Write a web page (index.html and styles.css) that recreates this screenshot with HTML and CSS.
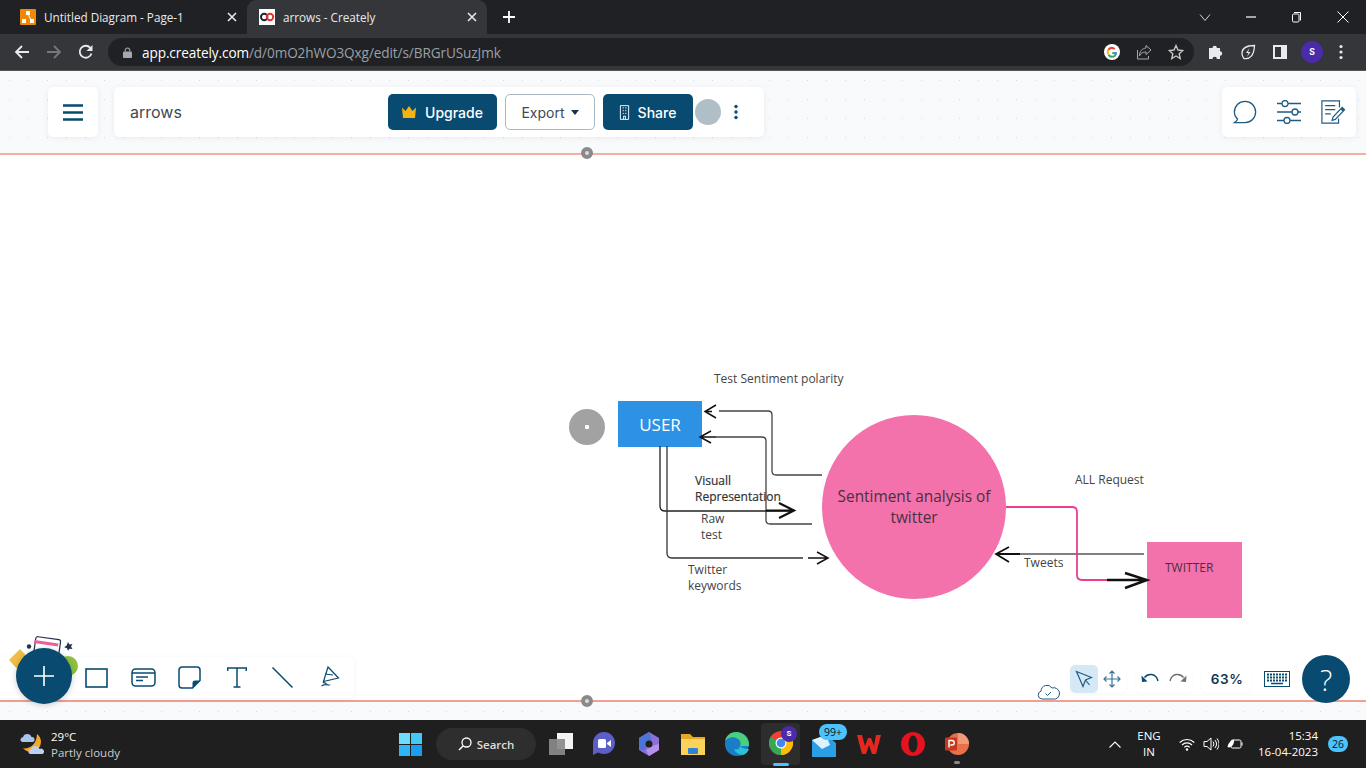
FILE: index.html
```html
<!DOCTYPE html>
<html lang="en">
<head>
    <meta charset="UTF-8">
    <title>arrows - Creately</title>
    <link rel="stylesheet" href="styles.css">
</head>
<body>
    <!-- browser chrome -->
    <div class="tabstrip">
        <div class="tab">
            <svg class="favicon" viewBox="0 0 16 16"><rect width="16" height="16" rx="1" fill="#f08705"/><path d="M6 2h4v4H9l2 4h3v4h-4v-4l-2-4-2 4v4H2v-4h4l2-4H6z" fill="#fff"/></svg>
            <span class="tab-title">Untitled Diagram - Page-1</span>
            <svg class="tab-close" viewBox="0 0 10 10"><path d="M1 1l8 8M9 1l-8 8" stroke="#e8eaed" stroke-width="1.6"/></svg>
        </div>
        <div class="tab tab-active">
            <svg class="favicon" viewBox="0 0 16 16"><rect width="16" height="16" fill="#fff"/><circle cx="5.2" cy="8" r="3.2" fill="none" stroke="#1d2433" stroke-width="2"/><circle cx="11" cy="8" r="3.2" fill="none" stroke="#e5322d" stroke-width="2"/></svg>
            <span class="tab-title">arrows - Creately</span>
            <svg class="tab-close" viewBox="0 0 10 10"><path d="M1 1l8 8M9 1l-8 8" stroke="#e8eaed" stroke-width="1.6"/></svg>
        </div>
        <svg class="new-tab" viewBox="0 0 12 12"><path d="M6 0v12M0 6h12" stroke="#fff" stroke-width="1.8"/></svg>
        <div class="win-btns">
            <svg viewBox="0 0 12 12"><path d="M1 3.5l5 6 5-6" fill="none" stroke="#d0d2d6" stroke-width="1"/></svg>
            <svg viewBox="0 0 12 12"><path d="M1 6h10" stroke="#fff" stroke-width="1.2"/></svg>
            <svg viewBox="0 0 12 12"><path d="M3 1.5h6.500v8" fill="none" stroke="#fff" stroke-width="1"/><rect x="1.500" y="3" width="6.500" height="8" rx="1.200" fill="none" stroke="#fff" stroke-width="1"/></svg>
            <svg viewBox="0 0 12 12"><path d="M.5.5l11 11M11.500.5l-11 11" stroke="#fff" stroke-width="1"/></svg>
        </div>
    </div>
    <div class="toolbar">
        <div class="nav-btns">
            <svg viewBox="0 0 16 16"><path d="M15 8H2M8 2L2 8l6 6" fill="none" stroke="#e8eaed" stroke-width="1.800"/></svg>
            <svg viewBox="0 0 16 16"><path d="M1 8h13M8 2l6 6-6 6" fill="none" stroke="#74777b" stroke-width="1.800"/></svg>
            <svg viewBox="0 0 16 16"><path d="M13.500 9.500A6 6 0 1 1 12.300 3.800" fill="none" stroke="#e8eaed" stroke-width="1.800"/><path d="M14.500 1v6h-6z" fill="#e8eaed"/></svg>
        </div>
        <div class="omnibox">
            <svg class="lock" viewBox="0 0 10 12"><path d="M2.500 5V3.500a2.500 2.500 0 0 1 5 0V5" fill="none" stroke="#a5a8ac" stroke-width="1.200"/><rect y="5" width="10" height="7" rx="1" fill="#a5a8ac"/></svg>
            <span class="url"><b>app.creately.com</b>/d/0mO2hWO3Qxg/edit/s/BRGrUSuzJmk</span>
            <svg class="omni-icon" viewBox="0 0 16 16"><circle cx="8" cy="8" r="8" fill="#fff"/><path d="M12.800 8.200H8.200v1.700h2.700a3.100 3.100 0 0 1-5.700.1L3.700 11.200A4.900 4.900 0 0 0 12.800 8.200z" fill="#34a853"/><path d="M5.100 9.600a3.100 3.100 0 0 1 0-3.200L3.700 5.100a4.900 4.900 0 0 0 0 5.800z" fill="#fbbc05"/><path d="M8 4.900a3 3 0 0 1 2.100.8l1.300-1.300A4.900 4.900 0 0 0 3.700 5.100L5.100 6.400A3 3 0 0 1 8 4.900z" fill="#ea4335"/><path d="M12.800 8.200h-3v1.700h1.100a3 3 0 0 1-1 1.300l1.200 1.200c1.100-1 1.800-2.400 1.700-4.200z" fill="#4285f4"/></svg>
            <svg class="omni-icon" viewBox="0 0 16 16"><path d="M10 1.500L15 6l-5 4.500V8C6.500 8 4.500 9.500 3.500 12c0-4.500 2.500-7.500 6.500-8z M1.500 6v9h11v-3" fill="none" stroke="#a5a8ac" stroke-width="1"/></svg>
            <svg class="omni-icon" viewBox="0 0 16 16"><path d="M8 1.500l2 4.500 4.800.5-3.600 3.200 1 4.800L8 12l-4.200 2.500 1-4.800L1.200 6.500 6 6z" fill="none" stroke="#c4c7c5" stroke-width="1.400"/></svg>
        </div>
        <div class="ext-btns">
            <svg viewBox="0 0 16 16"><path d="M1 4h3.500a2.200 2.200 0 0 1 4.400 0H12v3.300a2.200 2.200 0 0 1 0 4.400V15H8.900a2.200 2.200 0 0 0-4.400 0H1z" fill="#e8eaed"/></svg>
            <svg viewBox="0 0 16 16"><path d="M14.500 1.500C9 1.500 2 3 2 9.500c0 2 1 4 2 5 6 1 10-3 10.500-13z" fill="none" stroke="#e8eaed" stroke-width="1.300"/><path d="M9.500 4L6 9h2.500L7 13l3.500-5H8z" fill="#e8eaed"/></svg>
            <svg viewBox="0 0 16 16"><rect x="1" y="1" width="14" height="14" fill="#e8eaed"/><rect x="3" y="3" width="6" height="10" fill="#35363a"/></svg>
            <span class="profile">S</span>
            <svg class="chrome-menu" viewBox="0 0 4 16"><circle cx="2" cy="2.500" r="1.600" fill="#e8eaed"/><circle cx="2" cy="8" r="1.600" fill="#e8eaed"/><circle cx="2" cy="13.500" r="1.600" fill="#e8eaed"/></svg>
        </div>
    </div>

    <!-- creately canvas -->
    <main class="canvas">
        <div class="band band-top"></div>
        <div class="band band-bottom"></div>

        <svg class="connectors" viewBox="0 71 1366 649">
            <g fill="none" stroke="#444" stroke-width="1.300">
                <path d="M822 475H776Q772 475 772 471V415Q772 411 768 411H719"/>
                <path d="M812 524H770Q766 524 766 520V441Q766 437 762 437H716"/>
                <path d="M660 446V506Q660 511 665 511H790" stroke="#222"/>
                <path d="M667 446V553Q667 558 672 558H803" stroke="#333"/>
                <path d="M1144 554H1020" stroke="#555" stroke-width="1.500"/>
            </g>
            <path d="M1006 507H1072Q1077 507 1077 512V575Q1077 580 1082 580H1107" fill="none" stroke="#ea3f8d" stroke-width="1.800"/>
            <g fill="none" stroke="#111" stroke-width="1.500">
                <path d="M716 405L705 411.500L716 418M705 411.500H712"/>
                <path d="M711 431L700 437L711 443M700 437H716"/>
                <path d="M817 552L828 558L817 564M808 558H828"/>
                <path d="M1009 547L996 554L1009 562M996 554H1020" stroke-width="1.800"/>
                <path d="M779 503L794 510.500L779 518M766 510.500H794" stroke-width="2.200"/>
                <path d="M1125 573L1147 580L1125 588M1107 580H1147" stroke-width="2.400"/>
            </g>
        </svg>

        <div class="handle-dot handle-top"></div>
        <div class="handle-dot handle-bottom"></div>
        <div class="node-handle"></div>

        <div class="node node-user">USER</div>
        <div class="node node-sentiment">Sentiment analysis of twitter</div>
        <div class="node node-twitter">TWITTER</div>

        <div class="label label-polarity">Test Sentiment polarity</div>
        <div class="label label-visual">Visuall<br>Representation</div>
        <div class="label label-raw">Raw<br>test</div>
        <div class="label label-keywords">Twitter<br>keywords</div>
        <div class="label label-request">ALL Request</div>
        <div class="label label-tweets">Tweets</div>

        <header class="top-row">
            <button class="panel menu-btn" aria-label="Menu">
                <svg viewBox="0 0 20 17"><path d="M0 1.500h20M0 8.500h20M0 15.500h20" stroke="#084a70" stroke-width="2.600"/></svg>
            </button>
            <div class="panel title-bar">
                <span class="doc-name">arrows</span>
                <button class="btn btn-dark btn-upgrade">
                    <svg viewBox="0 0 14 12"><path d="M0 1.500l3.500 3.500L7 0l3.500 5L14 1.500 13 12H1z" fill="#f5b30f"/></svg>
                    Upgrade
                </button>
                <button class="btn btn-export">Export <i class="caret"></i></button>
                <button class="btn btn-dark btn-share">
                    <svg viewBox="0 0 12 16"><path d="M1.500.5h9v15h-9zM4 3h1.300M6.800 3h1.300M4 6h1.300M6.800 6h1.300M4 9h1.300M6.800 9h1.300M5 15.500V12h2v3.500" fill="none" stroke="#fff" stroke-width="1"/></svg>
                    Share
                </button>
                <span class="avatar"></span>
                <svg class="more" viewBox="0 0 4 16"><circle cx="2" cy="2.500" r="1.700" fill="#084a70"/><circle cx="2" cy="8" r="1.700" fill="#084a70"/><circle cx="2" cy="13.500" r="1.700" fill="#084a70"/></svg>
            </div>
            <div class="panel side-tools">
                <svg viewBox="0 0 26 26"><path d="M5 20.500C2.500 18.500 1.500 16 1.500 13 1.500 6.500 6.500 1.500 13 1.500S24.500 6.500 24.500 13 19.500 24.500 13 24.500C10 24.500 6 24.500 1.800 24.500 3.500 23.500 4.500 22.500 5 20.500z" fill="none" stroke="#1f5c82" stroke-width="1.400"/></svg>
                <svg viewBox="0 0 26 24"><g fill="none" stroke="#1f5c82" stroke-width="1.300"><path d="M1 3.500h5M12 3.500h13M1 12h15M22 12h3M1 20.500h7M14 20.500h11"/><circle cx="9" cy="3.500" r="3"/><circle cx="19" cy="12" r="3"/><circle cx="11" cy="20.500" r="3"/></g></svg>
                <svg viewBox="0 0 26 26"><g fill="none" stroke="#1f5c82" stroke-width="1.300"><path d="M20 8V1H1v24h18v-5M4.500 6h11M4.500 10.500h11M4.500 15h6"/></g><path d="M23 8l2.500 2.500-10 10.500-3.500 1 1-3.500z" fill="none" stroke="#1f5c82" stroke-width="1.300"/><path d="M23 8l2.500 2.500-2 2-2.500-2.500z" fill="#1f5c82"/></svg>
            </div>
        </header>

        <div class="shape-bar">
            <svg class="tool tool-rect" viewBox="0 0 23 20"><rect x="1" y="1" width="21" height="18" fill="none" stroke="#084a70" stroke-width="1.600"/></svg>
            <svg class="tool tool-card" viewBox="0 0 25 19"><rect x="1" y="1" width="23" height="17" rx="3.500" fill="none" stroke="#084a70" stroke-width="1.500"/><path d="M1 5h23M5 9h12M5 12.500h7" stroke="#084a70" stroke-width="1.400"/></svg>
            <svg class="tool tool-note" viewBox="0 0 23 23"><path d="M22 14.500V4a3 3 0 0 0-3-3H4a3 3 0 0 0-3 3v15a3 3 0 0 0 3 3h10.500z" fill="none" stroke="#084a70" stroke-width="1.500"/><path d="M22 14.500L14.500 22v-5a2.500 2.500 0 0 1 2.500-2.500z" fill="#084a70"/></svg>
            <svg class="tool tool-text" viewBox="0 0 20 21"><path d="M.7 4V1h18.600v3M10 1v19M6.500 20h7" fill="none" stroke="#084a70" stroke-width="1.500"/></svg>
            <svg class="tool tool-line" viewBox="0 0 21 21"><path d="M.5.500l20 20" stroke="#084a70" stroke-width="1.500"/></svg>
            <svg class="tool tool-pen" viewBox="0 0 20 23"><path d="M8 1l10.500 11-15 3.500zM5 8l8 1M3 17c2-2 4 3 6 2-2-.5-5-.5-7.500 1" fill="none" stroke="#084a70" stroke-width="1.200"/></svg>
        </div>

        <svg class="fab-art" viewBox="0 0 72 42">
            <path d="M1 24L12 13 24 26 12 36z" fill="#f0bd48"/>
            <circle cx="60" cy="30" r="10" fill="#8dc13f"/>
            <rect x="26" y="2" width="25" height="28" rx="2" fill="#fff" stroke="#26304f" stroke-width="1.200" transform="rotate(8 38 16)"/>
            <path d="M26.500 4l24 3.400-.6 3-24-3.400z" fill="#e9609d"/>
            <path d="M60 6l1.500 2.500 3-.5-1.500 2.500 1.500 2.500-3-.3-1.500 2-1-2.500-2.800-1 2.400-1.700z" fill="#26304f"/>
            <circle cx="21" cy="10.500" r="2.200" fill="#26304f"/>
        </svg>
        <button class="round-btn fab" aria-label="Add">
            <svg viewBox="0 0 20 20"><path d="M10 0v20M0 10h20" stroke="#fff" stroke-width="1.600"/></svg>
        </button>

        <svg class="cloud" viewBox="0 0 23 17"><path d="M5 16a4 4 0 0 1-1-7.800A6 6 0 0 1 15 5a4.500 4.500 0 0 1 3.500 11z" fill="none" stroke="#1f5c82" stroke-width="1"/><path d="M8.500 10.500l2 2 3.500-3.500" fill="none" stroke="#1f5c82" stroke-width="1"/></svg>
        <div class="view-tools">
            <div class="pill pill-cursor">
                <span class="seg seg-active"><svg viewBox="0 0 18 18"><path d="M1.500 1.500l15 6-6 2.500-2.500 6.500z M10.500 10l4 5" fill="none" stroke="#1f5c82" stroke-width="1.200"/></svg></span>
                <span class="seg"><svg viewBox="0 0 18 18"><path d="M9 1v16M1 9h16M6.500 3.500L9 1l2.500 2.500M6.500 14.500L9 17l2.500-2.500M3.500 6.500L1 9l2.500 2.500M14.500 6.500L17 9l-2.500 2.500" fill="none" stroke="#3b7399" stroke-width="1.200"/></svg></span>
            </div>
            <div class="pill pill-undo">
                <span class="seg"><svg viewBox="0 0 18 14"><path d="M3.500 5.500C7 1 15 1 17 9" fill="none" stroke="#084a70" stroke-width="1.400"/><path d="M.5 3.500L6.500 9.500 1 10z" fill="#084a70"/></svg></span>
                <span class="seg"><svg viewBox="0 0 18 14"><path d="M14.500 5.500C11 1 3 1 1 9" fill="none" stroke="#6d7278" stroke-width="1.400"/><path d="M17.500 3.500L11.500 9.500 17 10z" fill="#6d7278"/></svg></span>
            </div>
            <div class="pill pill-zoom">63%</div>
            <svg class="keyboard" viewBox="0 0 26 16"><rect x=".5" y=".5" width="25" height="15" fill="none" stroke="#084a70"/><path d="M3 3.500h20M3 6.500h20M3 9.500h20" stroke="#084a70" stroke-width="2" stroke-dasharray="2 1"/><path d="M7 12.500h12" stroke="#084a70" stroke-width="1.500"/></svg>
            <button class="round-btn help">?</button>
        </div>
    </main>

    <!-- windows taskbar -->
    <footer class="taskbar">
        <div class="weather">
            <svg viewBox="0 0 24 24"><path d="M17 2a10 10 0 1 1-14 14c6 2 14-4 14-14z" fill="#f3a72e"/><path d="M2 10a2.500 2.500 0 0 1 1-4.800A4.500 4.500 0 0 1 11.500 5a2.500 2.500 0 0 1 1 5z" fill="#a9c4ee"/><path d="M10 22a2.500 2.500 0 0 1 1-4.800 4.500 4.500 0 0 1 8.500-.2 2.600 2.600 0 0 1 3 5z" fill="#bcd0f2"/></svg>
            <div class="weather-text"><span>29°C</span><small>Partly cloudy</small></div>
        </div>
        <div class="task-icons">
            <svg class="ti-start" viewBox="0 0 23 23"><rect width="11" height="11" fill="#6fdcfb"/><rect x="12" width="11" height="11" fill="#45c7f8"/><rect y="12" width="11" height="11" fill="#2eb6f6"/><rect x="12" y="12" width="11" height="11" fill="#1a9cf0"/></svg>
            <div class="search-pill">
                <svg viewBox="0 0 14 14"><circle cx="8.500" cy="5.500" r="4.500" fill="none" stroke="#fff" stroke-width="1.300"/><path d="M5.300 8.700L1 13" stroke="#fff" stroke-width="1.500"/></svg>
                Search
            </div>
            <svg class="ti ti-widgets" viewBox="0 0 24 24"><rect x="8" y="1" width="16" height="16" fill="#f4f4f4"/><rect y="7" width="16" height="16" fill="#8a8a8a" opacity=".92"/></svg>
            <svg class="ti ti-meet" viewBox="0 0 24 24"><circle cx="12" cy="11" r="11" fill="#5b5fc7"/><path d="M1 11v12l6-3z" fill="#5b5fc7"/><rect x="6" y="7" width="8" height="9" rx="1.500" fill="#fff"/><path d="M15 11l4-3v7l-4-3z" fill="#fff"/></svg>
            <svg class="ti ti-hub" viewBox="0 0 22 24"><path d="M11 0l10 6v12l-10 6-10-6V6z" fill="#8c6fd8"/><path d="M1 6l10-6 3 8-6 4v6L1 18z" fill="#4f74d8"/><path d="M21 12v6l-10 6-3-6 6-4z" fill="#b690e8"/><circle cx="11" cy="12" r="3.500" fill="#202020"/></svg>
            <svg class="ti ti-folder" viewBox="0 0 24 24"><path d="M0 2h9l3 3h12v17H0z" fill="#e7a923"/><rect y="7" width="24" height="16" fill="#fbd35a"/><rect x="7" y="16" width="10" height="6" rx="1" fill="#2b84d6"/></svg>
            <svg class="ti ti-edge" viewBox="0 0 24 24"><circle cx="12" cy="12" r="12" fill="#1a7dc8"/><path d="M24 13C24 5 17 0 11 0 5 0 1 4 0 9c3-4 9-5 13-2 3 2 3 5 2 7h9z" fill="#47d17a"/><path d="M15 14c0 3-3 4-6 3 1 3 5 6 9 6 3-1 5-3 6-6-2 0-6 0-9-3z" fill="#2bc1d6"/></svg>
            <div class="ti-chrome">
                <svg viewBox="0 0 24 24"><circle cx="12" cy="12" r="12" fill="#ea4335"/><path d="M12 12L22.400 6A12 12 0 0 1 12 24z" fill="#fbbc05"/><path d="M12 12L12 24A12 12 0 0 1 1.600 6z" fill="#34a853"/><circle cx="12" cy="12" r="5.500" fill="#fff"/><circle cx="12" cy="12" r="4.300" fill="#4285f4"/></svg>
                <span class="chrome-badge">S</span>
                <i class="running running-active"></i>
            </div>
            <div class="ti-mail">
                <svg viewBox="0 0 24 24"><path d="M0 6l14-5 10 8v14H0z" fill="#2a9fe6"/><path d="M0 6l14-5 4 10-8 4z" fill="#dff1fd"/></svg>
                <span class="mail-badge">99+</span>
            </div>
            <svg class="ti ti-wps" viewBox="0 0 24 22"><path d="M0 2l5 0 3 11 3-8h3l3 8 2-11h5l-5 19h-4L12 12l-3 9H5z" fill="#e5281f"/></svg>
            <svg class="ti ti-opera" viewBox="0 0 24 24"><circle cx="12" cy="12" r="12" fill="#e3131f"/><ellipse cx="12" cy="12" rx="4.500" ry="8.500" fill="#202020"/></svg>
            <div class="ti-ppt">
                <svg viewBox="0 0 24 24"><circle cx="13" cy="12" r="11" fill="#e8704b"/><path d="M13 1a11 11 0 0 1 11 11H13z" fill="#f09a7a"/><rect y="5.500" width="12" height="13" rx="1" fill="#c4391d"/><path d="M4 15.500v-7h3a2.200 2.200 0 0 1 0 4.500H5.300" fill="none" stroke="#fff" stroke-width="1.400"/></svg>
                <i class="running"></i>
            </div>
        </div>
        <div class="tray">
            <svg class="tray-up" viewBox="0 0 12 7"><path d="M.5 6.500L6 1l5.500 5.500" fill="none" stroke="#fff" stroke-width="1.100"/></svg>
            <div class="lang">ENG<br>IN</div>
            <svg class="tray-wifi" viewBox="0 0 16 13"><path d="M.7 4.500a10.500 10.500 0 0 1 14.600 0M3 7a7 7 0 0 1 10 0M5.300 9.300a3.700 3.700 0 0 1 5.400 0" fill="none" stroke="#fff" stroke-width="1.100"/><circle cx="8" cy="11.500" r="1.200" fill="#fff"/></svg>
            <svg class="tray-vol" viewBox="0 0 16 14"><path d="M1 4.500h3L8 1v12L4 9.500H1z" fill="none" stroke="#fff" stroke-width="1"/><path d="M10 4.500a4 4 0 0 1 0 5M12 3a6.500 6.500 0 0 1 0 8M14 1.500a9 9 0 0 1 0 11" fill="none" stroke="#fff" stroke-width="1"/></svg>
            <svg class="tray-bat" viewBox="0 0 16 12"><rect x="4" y="2" width="10" height="8" rx="1.500" fill="none" stroke="#fff" stroke-width="1"/><path d="M15 4.500v3" stroke="#fff"/><path d="M.5 9C1 5 3.500 2.500 7 1.500 7.500 6 5 9 2 9.500" fill="#fff"/></svg>
            <div class="clock">15:34<br>16-04-2023</div>
            <span class="notif">26</span>
        </div>
    </footer>
</body>
</html>
```

FILE: styles.css
```css
* {
    box-sizing: border-box;
}
html, body {
    margin: 0;
    padding: 0;
}
body {
    width: 1366px;
    height: 768px;
    overflow: hidden;
    display: flex;
    flex-direction: column;
    font-family: "Open Sans", sans-serif;
    background: #fff;
}
svg {
    display: block;
    flex: none;
}
button {
    font: inherit;
    border: none;
    padding: 0;
    cursor: pointer;
}

/* browser chrome */
.tabstrip {
    height: 34px;
    flex: none;
    display: flex;
    align-items: stretch;
    background: #202124;
    padding-left: 8px;
    color: #e8eaed;
}
.tab {
    width: 239px;
    display: flex;
    align-items: center;
    padding: 0 10px 0 12px;
    font-size: 11.700px;
}
.tab-active {
    width: 240px;
    background: #35363a;
    border-radius: 9px 9px 0 0;
}
.favicon {
    width: 16px;
    height: 16px;
    margin-right: 8px;
}
.tab-title {
    flex: 1;
    white-space: nowrap;
    padding-bottom: 1px;
}
.tab-close {
    width: 10px;
    height: 10px;
}
.new-tab {
    width: 12px;
    height: 12px;
    margin: 11px 0 0 16px;
}
.win-btns {
    margin-left: auto;
    display: flex;
    gap: 34px;
    padding: 11px 17px 0 0;
}
.win-btns svg {
    width: 12px;
    height: 12px;
}
.toolbar {
    height: 37px;
    flex: none;
    display: flex;
    align-items: flex-start;
    background: #35363a;
    padding-top: 4px;
    border-bottom: 1px solid #555;
}
.nav-btns {
    width: 108px;
    height: 28px;
    display: flex;
    align-items: center;
    gap: 16px;
    padding-left: 14px;
}
.nav-btns svg {
    width: 16px;
    height: 16px;
}
.omnibox {
    width: 1086px;
    height: 28px;
    display: flex;
    align-items: center;
    background: #202124;
    border-radius: 14px;
    padding: 0 10px 0 15px;
}
.lock {
    width: 9px;
    height: 11px;
    margin-right: 10px;
}
.url {
    flex: 1;
    font-size: 13.600px;
    color: #9aa0a6;
    letter-spacing: -.1px;
}
.url b {
    font-weight: 400;
    color: #fff;
}
.omni-icon {
    width: 16px;
    height: 16px;
    margin-left: 16px;
}
.ext-btns {
    height: 28px;
    display: flex;
    align-items: center;
    gap: 16px;
    padding-left: 14px;
}
.ext-btns svg {
    width: 16px;
    height: 16px;
}
.ext-btns .chrome-menu {
    width: 4px;
    margin-left: 3px;
}
.profile {
    width: 22px;
    height: 22px;
    margin: 0 -3px;
    border-radius: 50%;
    background: #4a2ba8;
    color: #fff;
    font: 700 9px Roboto, sans-serif;
    display: flex;
    align-items: center;
    justify-content: center;
}

/* canvas */
.canvas {
    flex: 1;
    position: relative;
    background: #fff;
    overflow: hidden;
}
.band {
    position: absolute;
    left: 0;
    right: 0;
    background-color: #f9fafc;
    background-image: radial-gradient(#d6d9de 0.7px, transparent 0.9px);
    background-size: 19px 19px;
}
.band-top {
    top: 0;
    height: 84px;
    border-bottom: 2px solid #f6b0a2;
}
.band-bottom {
    top: 629px;
    height: 20px;
    border-top: 2px solid #f0a090;
}
.connectors {
    position: absolute;
    left: 0;
    top: 0;
    width: 1366px;
    height: 649px;
    z-index: 2;
}
.handle-dot {
    position: absolute;
    left: 581px;
    width: 12px;
    height: 12px;
    border-radius: 50%;
    border: 4px solid #8a8a8a;
    background: #ddd;
}
.handle-top {
    top: 76px;
}
.handle-bottom {
    top: 624px;
}
.node-handle {
    position: absolute;
    left: 569px;
    top: 338px;
    width: 36px;
    height: 36px;
    border-radius: 50%;
    background: radial-gradient(circle, #fff 0 2px, #a2a2a2 2.500px);
}
.node {
    position: absolute;
    display: flex;
    align-items: center;
    justify-content: center;
    text-align: center;
}
.node-user {
    left: 618px;
    top: 330px;
    width: 84px;
    height: 46px;
    background: #2d92e3;
    color: #fff;
    font-size: 17px;
}
.node-sentiment {
    left: 822px;
    top: 344px;
    width: 184px;
    height: 184px;
    padding: 0 14px;
    border-radius: 50%;
    background: #f472ab;
    color: #4a3040;
    font-size: 15.400px;
    line-height: 21px;
}
.node-twitter {
    left: 1147px;
    top: 471px;
    width: 95px;
    height: 76px;
    background: #f472ab;
    color: #4a3040;
    font-size: 12px;
    align-items: flex-start;
    justify-content: flex-start;
    padding: 17px 0 0 18px;
}
.label {
    position: absolute;
    z-index: 3;
    font-size: 12px;
    line-height: 16px;
    color: #444;
    white-space: nowrap;
}
.label-polarity {
    left: 714px;
    top: 300px;
}
.label-visual {
    left: 695px;
    top: 402px;
    color: #333;
    -webkit-text-stroke: .2px #333;
}
.label-raw {
    left: 701px;
    top: 440px;
}
.label-keywords {
    left: 688px;
    top: 491px;
}
.label-request {
    left: 1075px;
    top: 401px;
}
.label-tweets {
    left: 1024px;
    top: 484px;
}

/* floating panels */
.top-row {
    position: absolute;
    left: 48px;
    right: 10px;
    top: 16px;
    display: flex;
    z-index: 4;
}
.panel {
    height: 50px;
    background: #fff;
    border-radius: 5px;
    box-shadow: 0 1px 6px rgba(30, 60, 90, .08);
}
.menu-btn {
    width: 50px;
    display: flex;
    align-items: center;
    justify-content: center;
}
.menu-btn svg {
    width: 20px;
    height: 17px;
}
.title-bar {
    width: 650px;
    margin-left: 16px;
    display: flex;
    align-items: center;
    padding-left: 16px;
}
.doc-name {
    flex: 1;
    font: 16px Inter, Roboto, sans-serif;
    color: #3b4a57;
}
.btn {
    height: 36px;
    border-radius: 5px;
    display: flex;
    align-items: center;
    justify-content: center;
    font: 500 14px Inter, Roboto, sans-serif;
    white-space: nowrap;
}
.btn-dark {
    background: #084a70;
    color: #fff;
}
.btn-upgrade {
    width: 109px;
    gap: 9px;
}
.btn-upgrade svg {
    width: 14px;
    height: 12px;
}
.btn-export {
    width: 90px;
    margin: 0 8px;
    gap: 6px;
    background: #fff;
    border: 1px solid #a9b8c2;
    color: #3b4a57;
    font-weight: 400;
}
.caret {
    width: 0;
    height: 0;
    border: 4px solid transparent;
    border-top: 5px solid #12344d;
    border-bottom: 0;
}
.btn-share {
    width: 90px;
    gap: 8px;
}
.btn-share svg {
    width: 11px;
    height: 15px;
    margin-left: -1px;
}
.avatar {
    width: 26px;
    height: 26px;
    margin-left: 2px;
    border-radius: 50%;
    background: #b0bec5;
}
.more {
    width: 4px;
    height: 16px;
    margin: 0 26px 0 13px;
}
.side-tools {
    width: 134px;
    margin-left: auto;
    display: flex;
    align-items: center;
    justify-content: space-between;
    padding: 0 10px;
}
.side-tools svg {
    width: 26px;
    height: 24px;
}
.shape-bar {
    position: absolute;
    left: 0;
    top: 586px;
    width: 354px;
    height: 41px;
    background: #fff;
    border-radius: 0 5px 5px 0;
    box-shadow: 0 1px 5px rgba(30, 60, 90, .06);
    z-index: 4;
    display: flex;
    align-items: center;
    padding-left: 85px;
}
.tool-rect {
    width: 23px;
    height: 20px;
}
.tool-card {
    width: 25px;
    height: 19px;
    margin-left: 23px;
}
.tool-note {
    width: 23px;
    height: 23px;
    margin-left: 22px;
}
.tool-text {
    width: 20px;
    height: 21px;
    margin-left: 26px;
}
.tool-line {
    width: 21px;
    height: 21px;
    margin-left: 25px;
}
.tool-pen {
    width: 20px;
    height: 23px;
    margin-left: 27px;
}
.fab-art {
    position: absolute;
    left: 8px;
    top: 565px;
    width: 72px;
    height: 42px;
    z-index: 5;
}
.round-btn {
    position: absolute;
    border-radius: 50%;
    background: #084a70;
    color: #fff;
    display: flex;
    align-items: center;
    justify-content: center;
    z-index: 6;
}
.fab {
    left: 16px;
    top: 577px;
    width: 56px;
    height: 56px;
    box-shadow: 0 1px 6px rgba(0, 0, 0, .2);
}
.fab svg {
    width: 20px;
    height: 20px;
}
.cloud {
    position: absolute;
    left: 1037px;
    top: 612px;
    width: 23px;
    height: 17px;
    z-index: 4;
}
.view-tools {
    position: absolute;
    left: 1070px;
    top: 584px;
    display: flex;
    align-items: center;
    z-index: 4;
}
.pill {
    height: 28px;
    background: #fff;
    border-radius: 5px;
    box-shadow: 0 1px 3px rgba(30, 60, 90, .04);
    display: flex;
    overflow: hidden;
}
.pill-undo {
    margin-left: 10px;
}
.seg {
    width: 28px;
    height: 28px;
    display: flex;
    align-items: center;
    justify-content: center;
}
.seg-active {
    background: #d4e8f5;
    border-radius: 5px;
}
.seg svg {
    width: 18px;
    height: 18px;
}
.pill-undo svg {
    height: 14px;
}
.pill-zoom {
    width: 50px;
    margin-left: 10px;
    align-items: center;
    justify-content: center;
    font: 600 13.500px Inter, Roboto, sans-serif;
    letter-spacing: .6px;
    color: #12344d;
}
.keyboard {
    width: 26px;
    height: 16px;
    margin-left: 12px;
}
.help {
    position: static;
    width: 48px;
    height: 48px;
    margin-left: 12px;
    font: 300 29px "Open Sans", sans-serif;
}

/* taskbar */
.taskbar {
    height: 48px;
    flex: none;
    display: flex;
    align-items: center;
    background: #1f1f1f;
    color: #fff;
    z-index: 7;
}
.weather {
    width: 399px;
    display: flex;
    align-items: center;
    gap: 7px;
    padding-left: 20px;
}
.weather svg {
    width: 24px;
    height: 24px;
}
.weather-text {
    display: flex;
    flex-direction: column;
    font-size: 11.500px;
    line-height: 16px;
    padding-top: 1px;
}
.weather-text small {
    font-size: 11.500px;
    color: #ccc;
}
.task-icons {
    display: flex;
    align-items: center;
}
.ti-start {
    width: 23px;
    height: 23px;
}
.search-pill {
    width: 100px;
    height: 32px;
    margin: 0 13px 0 14px;
    border-radius: 16px;
    background: #2e2e2e;
    display: flex;
    align-items: center;
    justify-content: center;
    gap: 5px;
    font-size: 11.500px;
    font-weight: 600;
    color: #ddd;
}
.search-pill svg {
    width: 14px;
    height: 14px;
}
.ti {
    width: 24px;
    height: 24px;
}
.ti-meet {
    margin-left: 19px;
}
.ti-hub {
    width: 22px;
    margin-left: 22px;
}
.ti-folder {
    margin-left: 21px;
}
.ti-edge {
    margin-left: 20px;
}
.ti-chrome {
    position: relative;
    width: 39px;
    height: 42px;
    margin-left: 12px;
    background: #2d2d2d;
    border-radius: 4px;
    display: flex;
    justify-content: center;
    padding-top: 8px;
}
.ti-chrome svg {
    width: 24px;
    height: 24px;
}
.chrome-badge {
    position: absolute;
    right: 3px;
    top: 3px;
    width: 16px;
    height: 16px;
    border-radius: 50%;
    background: #4a2ba8;
    font: 700 8px/16px Roboto, sans-serif;
    text-align: center;
}
.running {
    position: absolute;
    left: 50%;
    bottom: -1px;
    width: 6px;
    height: 3px;
    margin-left: -3px;
    border-radius: 2px;
    background: #888;
}
.running-active {
    width: 16px;
    margin-left: -8px;
    background: #4cc2ff;
}
.ti-mail {
    position: relative;
    width: 24px;
    height: 24px;
    margin-left: 12px;
}
.ti-mail svg {
    width: 24px;
    height: 24px;
    transform: translateY(2px);
}
.mail-badge {
    position: absolute;
    left: 7px;
    top: -8px;
    width: 28px;
    height: 16px;
    border-radius: 8px;
    background: #4cc2ff;
    color: #111;
    font-size: 10.500px;
    line-height: 16px;
    text-align: center;
}
.ti-wps {
    margin-left: 21px;
}
.ti-opera {
    margin-left: 20px;
}
.ti-ppt {
    position: relative;
    width: 24px;
    height: 24px;
    margin-left: 20px;
}
.ti-ppt svg {
    width: 24px;
    height: 24px;
}
.ti-ppt .running {
    bottom: -8px;
}
.tray {
    margin-left: auto;
    display: flex;
    align-items: center;
    font-size: 11.500px;
    line-height: 16px;
    padding-right: 18px;
}
.tray-up {
    width: 12px;
    height: 7px;
}
.lang {
    margin-left: 9px;
    width: 38px;
    text-align: center;
}
.tray-wifi {
    width: 16px;
    height: 13px;
    margin-left: 11px;
}
.tray-vol {
    width: 16px;
    height: 14px;
    margin-left: 8px;
}
.tray-bat {
    width: 16px;
    height: 12px;
    margin-left: 8px;
}
.clock {
    margin-left: 15px;
    text-align: right;
}
.notif {
    width: 20px;
    height: 16px;
    margin-left: 10px;
    border-radius: 8px;
    background: #4cc2ff;
    color: #111;
    font-size: 10.500px;
    text-align: center;
}
```
